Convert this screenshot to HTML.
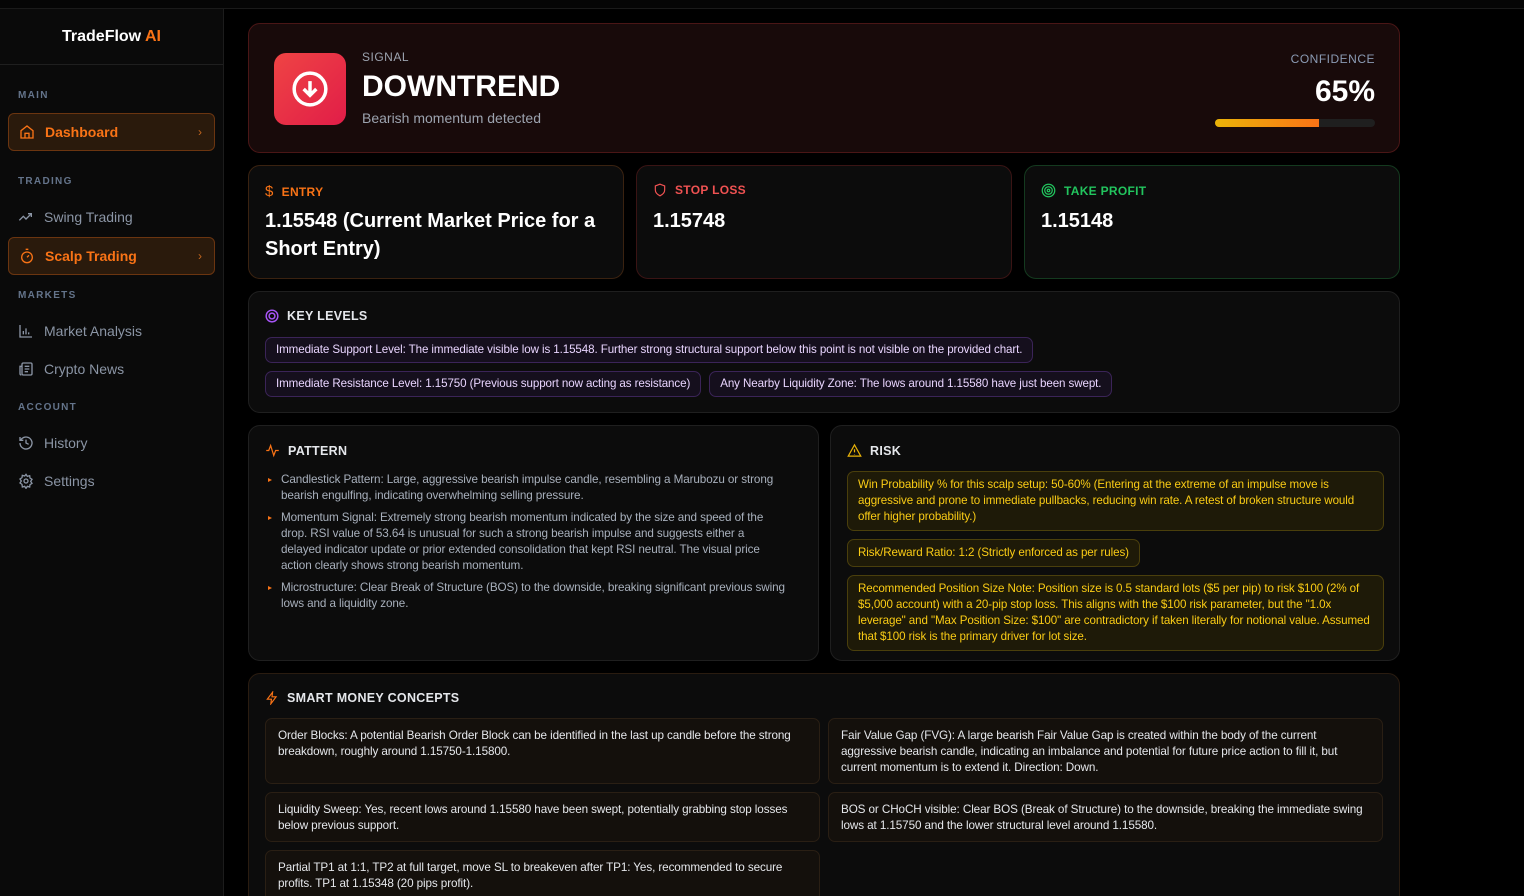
<!DOCTYPE html>
<html><head><meta charset="utf-8"><style>
*{box-sizing:border-box;margin:0;padding:0}
html,body{width:1524px;height:896px;overflow:hidden}
body{background:#000;font-family:"Liberation Sans",sans-serif;color:#d1d5db;position:relative}
.top{position:absolute;left:0;top:0;width:1524px;height:9px;background:#050505;border-bottom:1px solid #1a1a1a}
.side{position:absolute;left:0;top:9px;width:224px;height:887px;background:#0a0a0a;border-right:1px solid #1c1c1c}
.logo{height:56px;border-bottom:1px solid #1f1f1f;text-align:center;line-height:56px;font-weight:bold;font-size:16px;color:#fff}
.logo span{color:#f97316}
.sec{font-size:10px;letter-spacing:1.3px;color:#64748b;font-weight:bold;position:absolute;left:18px}
.item{position:absolute;left:8px;width:207px;height:38px;display:flex;align-items:center;padding-left:10px;font-size:14px;color:#8b95a5;gap:10px}
.item.act{background:#2a1a0c;border:1px solid #6b3510;border-radius:6px;color:#f97316;font-weight:bold}
.item .chev{position:absolute;right:12px;font-size:12px;color:#c2661f;font-weight:normal}
.card{position:absolute;background:#0c0c0c;border:1px solid #1f1f1f;border-radius:12px;overflow:hidden}
.h{display:flex;align-items:center;gap:8px;font-size:12.5px;font-weight:bold;color:#e5e7eb;letter-spacing:.3px}
.pill{display:inline-block;border-radius:7px;font-size:11.6px;padding:0 10px;line-height:24px;white-space:nowrap;letter-spacing:-.1px}
.kl{background:#150f1d;border:1px solid #3b2458;color:#e9d5ff}
.rk{background:#1e1a08;border:1px solid #4a3f0c;color:#facc15;white-space:normal;line-height:16px;padding:5px 10px}
.sm{position:absolute;background:#14100c;border:1px solid #2a1f14;border-radius:7px;padding:9px 12px;font-size:11.7px;line-height:16px;color:#e5e7eb;letter-spacing:-.1px}
ul{list-style:none}
li{position:relative;padding-left:16px;font-size:11.7px;line-height:16px;color:#a8b0bc;margin-bottom:6px;letter-spacing:-.1px}
li:before{content:"";position:absolute;left:3px;top:6px;border-left:4px solid #f97316;border-top:2.5px solid transparent;border-bottom:2.5px solid transparent}
.val{font-size:20px;font-weight:bold;color:#fff;line-height:28px}
</style></head><body>
<div class="top"></div>
<div class="side">
<div class="logo">TradeFlow <span>AI</span></div>
<div class="sec" style="top:81px">MAIN</div>
<div class="item act" style="top:104px"><svg width="16" height="16" viewBox="0 0 24 24" fill="none" stroke="#f97316" stroke-width="2"><path d="M3 10l9-7 9 7v11H3z"/><path d="M9 21v-7h6v7"/></svg>Dashboard<span class="chev">›</span></div>
<div class="sec" style="top:167px">TRADING</div>
<div class="item" style="top:189px"><svg width="16" height="16" viewBox="0 0 24 24" fill="none" stroke="#8b95a5" stroke-width="2"><path d="M2 17l6-6 4 4 8-8"/><path d="M15 7h5v5"/></svg>Swing Trading</div>
<div class="item act" style="top:228px"><svg width="16" height="16" viewBox="0 0 24 24" fill="none" stroke="#f97316" stroke-width="2"><circle cx="12" cy="14" r="8"/><path d="M10 2h4M12 14l3-3"/></svg>Scalp Trading<span class="chev">›</span></div>
<div class="sec" style="top:281px">MARKETS</div>
<div class="item" style="top:303px"><svg width="16" height="16" viewBox="0 0 24 24" fill="none" stroke="#8b95a5" stroke-width="2"><path d="M3 3v18h18M8 17v-5M12 17V8M16 17v-3"/></svg>Market Analysis</div>
<div class="item" style="top:341px"><svg width="16" height="16" viewBox="0 0 24 24" fill="none" stroke="#8b95a5" stroke-width="2"><rect x="6" y="3" width="15" height="18" rx="2"/><path d="M6 8H3v11a2 2 0 002 2M10 8h7M10 12h7M10 16h5"/></svg>Crypto News</div>
<div class="sec" style="top:393px">ACCOUNT</div>
<div class="item" style="top:415px"><svg width="16" height="16" viewBox="0 0 24 24" fill="none" stroke="#8b95a5" stroke-width="2"><path d="M3 12a9 9 0 1 0 3-6.7L3 8"/><path d="M3 3v5h5M12 7v5l4 2"/></svg>History</div>
<div class="item" style="top:453px"><svg width="16" height="16" viewBox="0 0 24 24" fill="none" stroke="#8b95a5" stroke-width="2"><circle cx="12" cy="12" r="3"/><path d="M12 2l2 3 3.5-1 .5 3.5 3 2-2 3 2 3-3 2-.5 3.5-3.5-1-2 3-2-3-3.5 1L6 17l-3-2 2-3-2-3 3-2 .5-3.5 3.5 1z"/></svg>Settings</div>
</div>

<div class="card" style="left:248px;top:23px;width:1152px;height:130px;background:#180a0a;border-color:#4a1616">
<div style="position:absolute;left:25px;top:29px;width:72px;height:72px;border-radius:12px;background:linear-gradient(135deg,#ef4444,#e11d48);display:flex;align-items:center;justify-content:center"><svg width="38" height="38" viewBox="0 0 24 24" fill="none" stroke="#fff" stroke-width="2.2"><circle cx="12" cy="12" r="10"/><path d="M12 7v9M8 12l4 4 4-4"/></svg></div>
<div style="position:absolute;left:113px;top:26px;font-size:12px;color:#9ca3af;letter-spacing:.5px">SIGNAL</div>
<div style="position:absolute;left:113px;top:46px;font-size:30px;font-weight:bold;color:#fff">DOWNTREND</div>
<div style="position:absolute;left:113px;top:86px;font-size:14px;color:#9ca3af">Bearish momentum detected</div>
<div style="position:absolute;right:24px;top:28px;font-size:12px;color:#8b9bb4;letter-spacing:.5px">CONFIDENCE</div>
<div style="position:absolute;right:24px;top:51px;font-size:30px;font-weight:bold;color:#fff">65%</div>
<div style="position:absolute;right:24px;top:95px;width:160px;height:8px;background:#1f1f1f;border-radius:4px;overflow:hidden"><div style="width:65%;height:100%;background:linear-gradient(90deg,#eab308,#f97316)"></div></div>
</div>

<div class="card" style="left:248px;top:165px;width:376px;height:114px;border-color:#3a2210">
<div class="h" style="position:absolute;left:16px;top:17px;color:#f97316;font-size:12px"><span style="font-size:15px;font-weight:normal">$</span>ENTRY</div>
<div class="val" style="position:absolute;left:16px;top:41px;width:332px">1.15548 (Current Market Price for a Short Entry)</div>
</div>
<div class="card" style="left:636px;top:165px;width:376px;height:114px;border-color:#3a1414">
<div class="h" style="position:absolute;left:16px;top:17px;color:#f05252;font-size:12px"><svg width="14" height="14" viewBox="0 0 24 24" fill="none" stroke="#f05252" stroke-width="2"><path d="M12 2l8 3v7c0 5-4 8-8 10-4-2-8-5-8-10V5z"/></svg>STOP LOSS</div>
<div class="val" style="position:absolute;left:16px;top:41px">1.15748</div>
</div>
<div class="card" style="left:1024px;top:165px;width:376px;height:114px;border-color:#143a1f">
<div class="h" style="position:absolute;left:16px;top:17px;color:#22c55e;font-size:12px"><svg width="15" height="15" viewBox="0 0 24 24" fill="none" stroke="#22c55e" stroke-width="2"><circle cx="12" cy="12" r="10"/><circle cx="12" cy="12" r="6"/><circle cx="12" cy="12" r="2"/></svg>TAKE PROFIT</div>
<div class="val" style="position:absolute;left:16px;top:41px">1.15148</div>
</div>

<div class="card" style="left:248px;top:291px;width:1152px;height:122px">
<div class="h" style="position:absolute;left:16px;top:17px"><svg width="14" height="14" viewBox="0 0 24 24" fill="none" stroke="#a855f7" stroke-width="2.5"><circle cx="12" cy="12" r="10"/><circle cx="12" cy="12" r="5"/></svg>KEY LEVELS</div>
<div style="position:absolute;left:16px;top:45px"><span class="pill kl">Immediate Support Level: The immediate visible low is 1.15548. Further strong structural support below this point is not visible on the provided chart.</span></div>
<div style="position:absolute;left:16px;top:79px"><span class="pill kl">Immediate Resistance Level: 1.15750 (Previous support now acting as resistance)</span><span class="pill kl" style="margin-left:8px">Any Nearby Liquidity Zone: The lows around 1.15580 have just been swept.</span></div>
</div>

<div class="card" style="left:248px;top:425px;width:571px;height:236px">
<div class="h" style="position:absolute;left:16px;top:17px"><svg width="15" height="15" viewBox="0 0 24 24" fill="none" stroke="#f97316" stroke-width="2"><path d="M2 12h4l3-8 5 16 3-8h5"/></svg>PATTERN</div>
<ul style="position:absolute;left:16px;top:46px;width:520px">
<li>Candlestick Pattern: Large, aggressive bearish impulse candle, resembling a Marubozu or strong bearish engulfing, indicating overwhelming selling pressure.</li>
<li>Momentum Signal: Extremely strong bearish momentum indicated by the size and speed of the drop. RSI value of 53.64 is unusual for such a strong bearish impulse and suggests either a delayed indicator update or prior extended consolidation that kept RSI neutral. The visual price action clearly shows strong bearish momentum.</li>
<li>Microstructure: Clear Break of Structure (BOS) to the downside, breaking significant previous swing lows and a liquidity zone.</li>
</ul>
</div>

<div class="card" style="left:830px;top:425px;width:570px;height:236px">
<div class="h" style="position:absolute;left:16px;top:17px"><svg width="15" height="15" viewBox="0 0 24 24" fill="none" stroke="#eab308" stroke-width="2"><path d="M12 3l10 18H2z"/><path d="M12 10v5M12 18v.5"/></svg>RISK</div>
<div style="position:absolute;left:16px;top:45px;width:537px">
<div class="pill rk">Win Probability % for this scalp setup: 50-60% (Entering at the extreme of an impulse move is aggressive and prone to immediate pullbacks, reducing win rate. A retest of broken structure would offer higher probability.)</div>
<div class="pill rk" style="margin-top:8px">Risk/Reward Ratio: 1:2 (Strictly enforced as per rules)</div>
<div class="pill rk" style="margin-top:8px">Recommended Position Size Note: Position size is 0.5 standard lots ($5 per pip) to risk $100 (2% of $5,000 account) with a 20-pip stop loss. This aligns with the $100 risk parameter, but the "1.0x leverage" and "Max Position Size: $100" are contradictory if taken literally for notional value. Assumed that $100 risk is the primary driver for lot size.</div>
</div>
</div>

<div class="card" style="left:248px;top:673px;width:1152px;height:240px;border-color:#2a1c10">
<div class="h" style="position:absolute;left:16px;top:17px"><svg width="14" height="14" viewBox="0 0 24 24" fill="none" stroke="#f97316" stroke-width="2"><path d="M13 2L4 14h7l-1 8 9-12h-7z"/></svg>SMART MONEY CONCEPTS</div>
<div class="sm" style="left:16px;top:44px;width:555px;height:66px">Order Blocks: A potential Bearish Order Block can be identified in the last up candle before the strong breakdown, roughly around 1.15750-1.15800.</div>
<div class="sm" style="left:579px;top:44px;width:555px;height:66px">Fair Value Gap (FVG): A large bearish Fair Value Gap is created within the body of the current aggressive bearish candle, indicating an imbalance and potential for future price action to fill it, but current momentum is to extend it. Direction: Down.</div>
<div class="sm" style="left:16px;top:118px;width:555px;height:50px">Liquidity Sweep: Yes, recent lows around 1.15580 have been swept, potentially grabbing stop losses below previous support.</div>
<div class="sm" style="left:579px;top:118px;width:555px;height:50px">BOS or CHoCH visible: Clear BOS (Break of Structure) to the downside, breaking the immediate swing lows at 1.15750 and the lower structural level around 1.15580.</div>
<div class="sm" style="left:16px;top:176px;width:555px;height:60px">Partial TP1 at 1:1, TP2 at full target, move SL to breakeven after TP1: Yes, recommended to secure profits. TP1 at 1.15348 (20 pips profit).</div>
</div>
</body></html>
